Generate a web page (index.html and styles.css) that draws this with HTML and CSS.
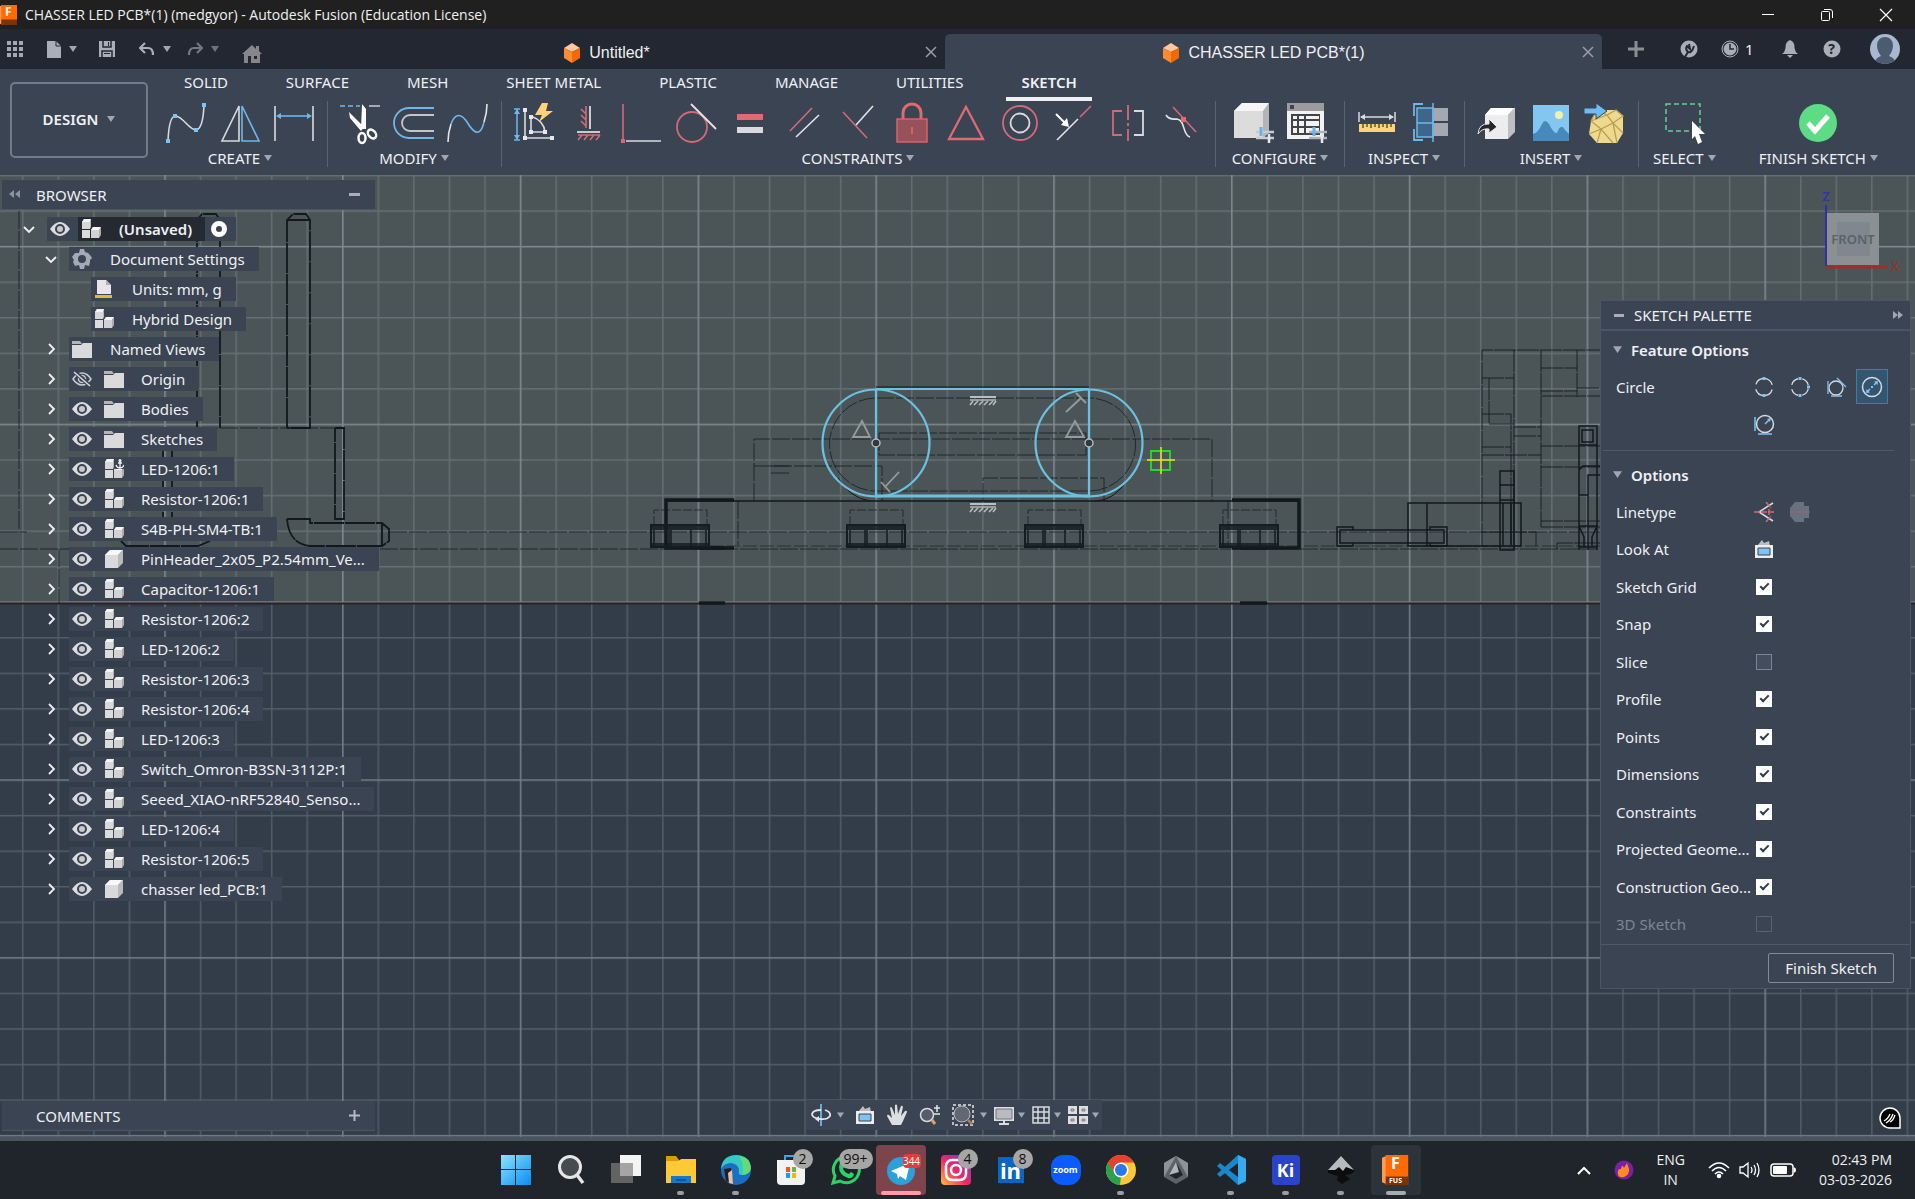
FILE: index.html
```html
<!DOCTYPE html>
<html lang="en">
<head>
    <meta charset="UTF-8">
    <meta name="viewport" content="width=device-width, initial-scale=1.0">
    <title>CHASSER LED PCB*(1) (medgyor) - Autodesk Fusion (Education License)</title>
    <link rel="stylesheet" href="styles.css">
</head>
<body>

<!-- shared icons -->
<svg class="defs" width="0" height="0">
  <symbol id="eye" viewBox="0 0 20 14">
    <path d="M0 7Q5 0 10 0T20 7Q15 14 10 14T0 7Z" fill="#dcdcde"/>
    <circle cx="10" cy="7" r="4" fill="#c9c9cc" stroke="#3b4453" stroke-width="2"/>
  </symbol>
  <symbol id="eye-off" viewBox="0 0 20 16">
    <path d="M1 8Q5 2 10 2T19 8Q15 14 10 14T1 8Z" fill="none" stroke="#c9ccd2" stroke-width="1.5"/>
    <circle cx="10" cy="8" r="3.5" fill="none" stroke="#c9ccd2" stroke-width="1.5"/>
    <path d="M3 1L18 15" stroke="#3b4453" stroke-width="4"/>
    <path d="M2 1L18 15" stroke="#dcdcde" stroke-width="1.5"/>
  </symbol>
  <symbol id="folder" viewBox="0 0 20 18">
    <path d="M0 1H8L10 4H0Z" fill="#b4b4b6"/>
    <path d="M0 5H9L11 3H20V18H0Z" fill="#dadada"/>
  </symbol>
  <symbol id="parts" viewBox="0 0 20 20">
    <path d="M1 3L3 0H10L9 3V10H1Z" fill="#d8d8d8"/>
    <path d="M1 3L3 0H10L9 3Z" fill="#f4f4f4"/>
    <path d="M9 3L10 0V8L9 10Z" fill="#b8b8b8"/>
    <path d="M1 11H9V19H1Z" fill="#dcdcdc"/>
    <path d="M10 11L12 8H20L18 11V19H10Z" fill="#d2d2d2"/>
    <path d="M10 11L12 8H20L18 11Z" fill="#f6f6f6"/>
    <path d="M18 11L20 8V16L18 19Z" fill="#adadad"/>
  </symbol>
  <symbol id="parts-anchor" viewBox="0 0 20 20">
    <use href="#parts"/>
    <path d="M11 0H20V10H11Z" fill="#3b4453"/>
    <path d="M16 2V9M14 4H18M12 6Q13 9 16 9T20 6" fill="none" stroke="#f2f2f2" stroke-width="1.300"/>
    <circle cx="16" cy="1.500" r="1.500" fill="#f2f2f2"/>
  </symbol>
  <symbol id="body" viewBox="0 0 20 20">
    <path d="M1 6L6 1H19L14 6V19H1Z" fill="#dadada"/>
    <path d="M1 6L6 1H19L14 6Z" fill="#f8f8f8"/>
    <path d="M14 6L19 1V14L14 19Z" fill="#b9b9b9"/>
  </symbol>
  <symbol id="right" viewBox="0 0 10 12"><path d="M3 1L8 6L3 11" fill="none" stroke="#f0f0f2" stroke-width="1.800"/></symbol>
  <symbol id="down" viewBox="0 0 12 10"><path d="M1 3L6 8L11 3" fill="none" stroke="#f0f0f2" stroke-width="1.800"/></symbol>
  <symbol id="caret" viewBox="0 0 8 6"><path d="M0 0H8L4 6Z" fill="#a0a7b3"/></symbol>
  <symbol id="cube" viewBox="0 0 18 20">
    <path d="M9 0L17 5L9 9L1 5Z" fill="#ffc9a0"/>
    <path d="M1 5L9 9V20L1 15Z" fill="#ff8a30"/>
    <path d="M17 5L9 9V20L17 15Z" fill="#f26a05"/>
  </symbol>
  <symbol id="cross" viewBox="0 0 12 12"><path d="M1 1L11 11M11 1L1 11" stroke="currentColor" stroke-width="1.500"/></symbol>
  <symbol id="lookat" viewBox="0 0 20 20">
    <path d="M3 7L8 1L10 4L15 2L16 7Z" fill="#bdbdc0"/>
    <path d="M1 6H19V19H1Z" fill="#ededee"/>
    <path d="M4 9H16V16H4Z" fill="#7cc4f5" stroke="#3b4453"/>
  </symbol>
  <symbol id="fusion" viewBox="0 0 30 32">
    <path d="M0 3L7 0V32L0 29Z" fill="#ff9a55"/>
    <path d="M4 0H28V32H4Z" fill="#ff6b00"/>
    <path d="M4 23H28V32H4Z" fill="#7a3304"/>
  </symbol>
</svg>

<header class="titlebar">
  <div class="app-icon"><svg width="17" height="20" viewBox="2 0 26 32" preserveAspectRatio="none"><use href="#fusion" width="30" height="32"/></svg><b>F</b></div>
  <h1>CHASSER LED PCB*(1) (medgyor) - Autodesk Fusion (Education License)</h1>
  <div class="win-buttons">
    <button aria-label="Minimize"><svg width="14" height="14"><path d="M1 6.500H13" stroke="#fff"/></svg></button>
    <button aria-label="Restore"><svg width="14" height="14" fill="none" stroke="#fff"><rect x="1.500" y="3.500" width="8" height="9" rx="1"/><path d="M4 1.500H10Q12.500 1.500 12.500 4V10"/></svg></button>
    <button aria-label="Close"><svg width="14" height="14"><path d="M1 1L13 13M13 1L1 13" stroke="#fff" stroke-width="1.200"/></svg></button>
  </div>
</header>

<nav class="tabbar">
  <div class="quick">
    <button aria-label="Data panel"><svg width="16" height="16" fill="#a3a8b2"><path d="M0 0H4V4H0ZM6 0H10V4H6ZM12 0H16V4H12ZM0 6H4V10H0ZM6 6H10V10H6ZM12 6H16V10H12ZM0 12H4V16H0ZM6 12H10V16H6ZM12 12H16V16H12Z"/></svg></button>
    <button class="with-caret file" aria-label="File"><svg width="14" height="17"><path d="M0 0H9L14 5V17H0Z" fill="#a9aeb8"/><path d="M9 0V5H14" fill="none" stroke="#222731"/></svg><svg class="caret"><use href="#caret"/></svg></button>
    <button class="save" aria-label="Save"><svg width="16" height="16"><path d="M0 0H16V16H0Z" fill="#a9aeb8"/><path d="M4 0V6H12V0M3 16V10H13V16" fill="none" stroke="#222731" stroke-width="1.500"/><path d="M9 1H10V5H9ZM5 12H11V13H5Z" fill="#222731"/></svg></button>
    <button class="with-caret" aria-label="Undo"><svg width="16" height="14"><path d="M6 1L1 6L6 11M1 6H9Q14 6 14 13" fill="none" stroke="#a9aeb8" stroke-width="2.200"/></svg><svg class="caret"><use href="#caret"/></svg></button>
    <button class="with-caret dim" aria-label="Redo"><svg width="16" height="14"><path d="M10 1L15 6L10 11M15 6H7Q2 6 2 13" fill="none" stroke="#a9aeb8" stroke-width="2.200"/></svg><svg class="caret"><use href="#caret"/></svg></button>
    <button class="home" aria-label="Home"><svg width="20" height="18"><path d="M0 9L10 0L14 4V1H17V6L20 9H18V18H2V9Z" fill="#85878a"/><path d="M6 18V11H9V18M12 11H15V14H12Z" fill="#222731"/></svg></button>
  </div>
  <div class="doc-tabs">
    <div class="doc-tab"><a href="#untitled"><svg width="18" height="20"><use href="#cube"/></svg>Untitled*</a><button aria-label="Close tab"><svg width="12" height="12"><use href="#cross"/></svg></button></div>
    <div class="doc-tab active"><a href="#chasser"><svg width="18" height="20"><use href="#cube"/></svg>CHASSER LED PCB*(1)</a><button aria-label="Close tab"><svg width="12" height="12"><use href="#cross"/></svg></button></div>
  </div>
  <div class="account">
    <button class="plus" aria-label="New tab"><svg width="16" height="16"><path d="M8 0V16M0 8H16" stroke="#8b8e92" stroke-width="3"/></svg></button>
    <button class="ext" aria-label="Extensions"><svg width="18" height="18"><circle cx="9" cy="9" r="8.500" fill="#a9aeb8"/><path d="M5 17L8 12Q5 9 7 6L10 9L9 4M12 11L14 6M8 12Q11 13 12 10" fill="none" stroke="#222731" stroke-width="2"/></svg></button>
    <button class="jobs" aria-label="Job status"><svg width="18" height="18" fill="none" stroke="#a9aeb8"><circle cx="9" cy="9" r="8"/><circle cx="9" cy="9" r="6" fill="#a9aeb8"/><path d="M9 4V9H13" stroke="#222731" stroke-width="1.500"/></svg>1</button>
    <button class="bell" aria-label="Notifications"><svg width="16" height="18"><path d="M8 0Q13 2 12.500 8Q13 12 16 14H0Q3 12 3.500 8Q3 2 8 0ZM5 15H11L8 18Z" fill="#a9aeb8"/></svg></button>
    <button class="help" aria-label="Help"><svg width="18" height="18"><circle cx="9" cy="9" r="8.500" fill="#a9aeb8"/></svg><b>?</b></button>
    <button class="avatar" aria-label="Profile"><svg width="30" height="30"><defs><clipPath id="av"><circle cx="15" cy="15" r="15"/></clipPath></defs><g clip-path="url(#av)"><path d="M0 0H30V30H0Z" fill="#a8b8d0"/><path d="M4 30Q5 24 11 22Q7 17 7 11Q8 3 15 3T23 11Q23 17 19 22Q25 24 26 30Z" fill="#4c5b70"/></g></svg></button>
  </div>
</nav>

<section class="ribbon">
  <button class="workspace">DESIGN<svg class="caret"><use href="#caret"/></svg></button>
  <div class="ribbon-main">
    <div class="ribbon-tabs">
      <a href="#solid">SOLID</a>
      <a href="#surface">SURFACE</a>
      <a href="#mesh">MESH</a>
      <a href="#sheet">SHEET METAL</a>
      <a href="#plastic">PLASTIC</a>
      <a href="#manage">MANAGE</a>
      <a href="#utilities">UTILITIES</a>
      <a href="#sketch" class="current">SKETCH</a>
    </div>
    <div class="groups">
      <div class="group">
        <div class="tools">
          <button aria-label="Spline"><svg viewBox="0 0 44 44"><path d="M4 40Q5 16 11 15C18 14 25 29 32 29Q39 28 40 4" fill="none" stroke="#d8dadf" stroke-width="1.600"/><path d="M2 38H6V42H2ZM9 13H13V17H9ZM30 27H34V31H30ZM38 2H42V6H38Z" fill="#7cc4f5"/></svg></button>
          <button aria-label="Mirror"><svg viewBox="0 0 44 44" fill="none" stroke-width="1.600"><path d="M21 5V40H4Z" stroke="#d8dadf"/><path d="M24 5V40H41Z" stroke="#6db8ea"/></svg></button>
          <button aria-label="Sketch dimension"><svg viewBox="0 0 44 44"><path d="M3 5V40M41 5V40" stroke="#d8dadf" stroke-width="1.600"/><path d="M6 15H38" stroke="#6db8ea" stroke-width="1.600"/><path d="M4 15L9 12V18ZM40 15L35 12V18Z" fill="#6db8ea"/></svg></button>
        </div>
        <button class="group-label">CREATE<svg class="caret"><use href="#caret"/></svg></button>
      </div>
      <div class="group">
        <div class="tools">
          <button aria-label="Trim"><svg viewBox="0 0 44 44"><path d="M2 5H22" stroke="#6db8ea" stroke-width="1.600" stroke-dasharray="5 3"/><path d="M31 5H42" stroke="#c4c6ca" stroke-width="1.600"/><path d="M24 3L28 8V28H23ZM11 11L26 26L23 30L12 17Z" fill="#fff"/><ellipse cx="24" cy="37" rx="3.500" ry="5" fill="none" stroke="#fff" stroke-width="2.500"/><ellipse cx="34" cy="33" rx="3.500" ry="5" transform="rotate(-40 34 33)" fill="none" stroke="#fff" stroke-width="2.500"/></svg></button>
          <button aria-label="Offset"><svg viewBox="0 0 44 44" fill="none" stroke-width="1.800"><path d="M42 7H17A15 15 0 0 0 17 37H42" stroke="#6db8ea"/><path d="M42 14H18A8 8 0 0 0 18 30H42" stroke="#c4c6ca"/></svg></button>
          <button aria-label="Extend"><svg viewBox="0 0 44 44" fill="none" stroke-width="1.600"><path d="M2 41Q2 32 5 23M38 21Q41 12 41 3" stroke="#e4e5e8"/><path d="M5 23C9 12 15 12 21 21C27 31 34 38 38 21" stroke="#6db8ea"/></svg></button>
        </div>
        <button class="group-label">MODIFY<svg class="caret"><use href="#caret"/></svg></button>
      </div>
      <div class="group constraints">
        <div class="tools">
          <button aria-label="Auto constrain"><svg viewBox="0 0 44 44" fill="none"><path d="M5 8V38M2 8H8M2 39H8" stroke="#6db8ea" stroke-width="1.500"/><path d="M5 8L2 13H8ZM5 39L2 34H8Z" fill="#6db8ea"/><path d="M13 9V37H40M19 15V31H33Q32 20 19 15" stroke="#d8dadf" stroke-width="1.600"/><path d="M11 7H15V11H11ZM11 35H15V39H11ZM38 35H42V39H38ZM17 14H21V18H17ZM17 29H21V33H17ZM31 29H35V33H31Z" fill="#e8e8ea"/><path d="M30 2L23 14H30L27 21L41 10H34L36 2Z" fill="#ffd27a"/></svg></button>
          <button aria-label="Horizontal/Vertical"><svg viewBox="0 0 44 44" fill="none" stroke-width="1.600"><path d="M20 5V27M15 8L20 13M15 14L20 19M15 20L20 25M12 34H34M16 34L12 39M22 34L18 39M28 34L24 39M34 34L30 39" stroke="#d36a75"/><path d="M24 5V28M11 31H34" stroke="#c9cbd0" stroke-width="2"/></svg></button>
          <button aria-label="Coincident"><svg viewBox="0 0 44 44"><path d="M3 3V38" stroke="#d36a75" stroke-width="1.600"/><path d="M6 40H41" stroke="#d8dadf" stroke-width="1.600"/><path d="M1 38H5V42H1Z" fill="#e8606d"/></svg></button>
          <button aria-label="Tangent"><svg viewBox="0 0 44 44" fill="none" stroke-width="1.800"><circle cx="18" cy="26" r="15" stroke="#d36a75"/><path d="M17 3L42 28" stroke="#e4e5e8"/></svg></button>
          <button aria-label="Equal"><svg viewBox="0 0 44 44"><path d="M9 13H35V19H9Z" fill="#e06a70"/><path d="M9 26H35V32H9Z" fill="#d8dadf"/></svg></button>
          <button aria-label="Parallel"><svg viewBox="0 0 44 44" stroke-width="1.600"><path d="M8 30L30 7" stroke="#d36a75"/><path d="M14 36L37 14" stroke="#e4e5e8"/></svg></button>
          <button aria-label="Perpendicular"><svg viewBox="0 0 44 44" stroke-width="1.600"><path d="M7 11L31 37" stroke="#d36a75"/><path d="M20 24L37 5" stroke="#e4e5e8"/></svg></button>
          <button aria-label="Fix"><svg viewBox="0 0 44 44"><path d="M13 18V12A9 9 0 0 1 31 12V18" fill="none" stroke="#e06a70" stroke-width="3"/><path d="M7 18H37V41H7Z" fill="#97515b" stroke="#d9626d" stroke-width="1.500"/><path d="M22 26V33" stroke="#e06a70" stroke-width="1.500"/></svg></button>
          <button aria-label="Midpoint"><svg viewBox="0 0 44 44"><path d="M22 6L39 38H5Z" fill="none" stroke="#e06a70" stroke-width="2.300"/></svg></button>
          <button aria-label="Concentric"><svg viewBox="0 0 44 44" fill="none" stroke-width="1.800"><circle cx="22" cy="22" r="17" stroke="#d36a75"/><circle cx="22" cy="22" r="9.500" stroke="#d8dadf"/></svg></button>
          <button aria-label="Collinear"><svg viewBox="0 0 44 44" stroke-width="1.600"><path d="M5 39L26 18" stroke="#e4e5e8"/><path d="M28 16L39 5" stroke="#d36a75"/><path d="M4 13L14 23" stroke="#fff" stroke-width="2"/><path d="M17 26L9 24L15 17Z" fill="#fff"/></svg></button>
          <button aria-label="Symmetry"><svg viewBox="0 0 44 44" fill="none" stroke-width="1.800"><path d="M16 10H7V34H16" stroke="#d36a75"/><path d="M22 4V40" stroke="#d36a75" stroke-dasharray="15 3 3 3"/><path d="M28 10H37V34H28" stroke="#d8dadf"/></svg></button>
          <button aria-label="Curvature"><svg viewBox="0 0 44 44" fill="none" stroke-width="1.600"><path d="M13 6L36 31" stroke="#d36a75"/><path d="M6 14Q9 19 17 18C26 20 22 34 30 36" stroke="#e4e5e8"/><path d="M21 16H26V21H21Z" fill="#e06a70"/></svg></button>
        </div>
        <button class="group-label">CONSTRAINTS<svg class="caret"><use href="#caret"/></svg></button>
      </div>
      <div class="group wide">
        <div class="tools">
          <button aria-label="Configure model"><svg viewBox="0 0 44 44"><path d="M3 10L11 2H38L34 10V37H3Z" fill="#dcdcdc"/><path d="M3 10L11 2H38L32 10Z" fill="#f6f6f6"/><path d="M32 10L38 2V32L32 37Z" fill="#b4b4b4"/><path d="M25 31H43M25 37H43" stroke="#c9cbd0" stroke-width="2.500"/><path d="M30 26V35" stroke="#63b5ee" stroke-width="3"/><path d="M38 33V42" stroke="#e8e8ea" stroke-width="2.500"/></svg></button>
          <button aria-label="Configuration table"><svg viewBox="0 0 44 44"><path d="M2 2H39V38H2Z" fill="#f2f2f2"/><path d="M2 2H39V10H2Z" fill="#9c9c9e"/><path d="M5 4H9V8H5ZM6 13H35V34H6Z" fill="#414346"/><path d="M8 15H12V18H8ZM14 15H19V18H14ZM21 15H34V18H21ZM8 20H12V25H8ZM14 20H19V25H14ZM21 20H34V25H21ZM8 27H12V32H8ZM14 27H19V32H14ZM21 27H34V32H21Z" fill="#f2f2f2"/><path d="M24 31H42M24 37H42" stroke="#aeb3bb" stroke-width="2.500"/><path d="M29 26V35" stroke="#63b5ee" stroke-width="3"/><path d="M37 33V42" stroke="#e8e8ea" stroke-width="2.500"/></svg></button>
        </div>
        <button class="group-label">CONFIGURE<svg class="caret"><use href="#caret"/></svg></button>
      </div>
      <div class="group">
        <div class="tools">
          <button aria-label="Measure"><svg viewBox="0 0 44 44"><path d="M4 11V21M40 11V21M6 16H38" stroke="#d8dadf" stroke-width="1.500"/><path d="M5 16L10 13V19ZM39 16L34 13V19Z" fill="#d8dadf"/><path d="M4 23H40V31H4Z" fill="#ffd27a"/><path d="M8 23V27M12 23V26M16 23V27M20 23V26M24 23V27M28 23V26M32 23V27M36 23V26" stroke="#5f5335" stroke-width="1.500"/></svg></button>
          <button aria-label="Section"><svg viewBox="0 0 44 44"><path d="M8 7H24V22H8ZM8 22H24V36H8Z" fill="#3d668a" stroke="#6db8ea" stroke-width="1.500"/><path d="M25 7H39V20H25ZM25 22H39V35H25Z" fill="#a6a8b0"/><path d="M14 3H5V15M14 39H5V28" fill="none" stroke="#6db8ea" stroke-width="1.800"/><path d="M24 2V41" stroke="#6db8ea" stroke-width="1.500"/></svg></button>
        </div>
        <button class="group-label">INSPECT<svg class="caret"><use href="#caret"/></svg></button>
      </div>
      <div class="group">
        <div class="tools">
          <button aria-label="Insert derive"><svg viewBox="0 0 44 44"><path d="M10 14L16 7H40L33 14V38H10Z" fill="#ececee"/><path d="M10 14L16 7H40L33 14Z" fill="#fff"/><path d="M33 14L40 7V31L33 38Z" fill="#bfbfc3"/><path d="M3 33Q4 22 14 23V18L22 26L14 32V28Q7 27 3 33Z" fill="#26282c" stroke="#e8e8ea"/></svg></button>
          <button aria-label="Insert image"><svg viewBox="0 0 44 44"><path d="M4 4H40V40H4Z" fill="#84c6f2"/><circle cx="30" cy="14" r="4" fill="#f5efae"/><path d="M4 33Q9 32 13 23Q16 17 20 23Q25 33 28 32Q32 21 36 29L40 33V40H4Z" fill="#4789ba"/></svg></button>
          <button aria-label="Insert mesh"><svg viewBox="0 0 44 44"><path d="M8 20L14 9H33L40 15V32L34 42H14L6 33Z" fill="#f0d98f"/><path d="M8 20L14 9L24 14L33 9L40 15L30 22L40 32M8 20L24 14L30 22L18 28L8 20M6 33L18 28L30 42M30 22L34 42M18 28L14 42" fill="none" stroke="#b89f54" stroke-width="1.300"/><path d="M1 7H13V2L24 10L13 18V13H1Z" fill="#6dbcf5" stroke="#3a4453"/></svg></button>
        </div>
        <button class="group-label">INSERT<svg class="caret"><use href="#caret"/></svg></button>
      </div>
      <div class="group select">
        <div class="tools">
          <button aria-label="Select"><svg viewBox="0 0 44 44"><path d="M4 3H38V30H4Z" fill="none" stroke="#5fd48c" stroke-width="1.500" stroke-dasharray="5 3"/><path d="M30 20L43 33H37L40 41L36 43L33 35L30 38Z" fill="#fff"/></svg></button>
        </div>
        <button class="group-label">SELECT<svg class="caret"><use href="#caret"/></svg></button>
      </div>
      <div class="group finish">
        <div class="tools">
          <button aria-label="Finish sketch"><svg viewBox="0 0 44 44"><circle cx="22" cy="22" r="19" fill="#5edb85"/><path d="M12 22L19 30L32 15" fill="none" stroke="#fff" stroke-width="5"/></svg></button>
        </div>
        <button class="group-label">FINISH SKETCH<svg class="caret"><use href="#caret"/></svg></button>
      </div>
    </div>
  </div>
</section>

<main class="canvas">
  <!-- sketch drawing, in window coordinates -->
  <svg class="sketch" width="100%" height="100%">
    <defs>
      <pattern id="minor" width="35.560" height="35.560" patternUnits="userSpaceOnUse" x="-13.600" y="70.900">
        <path d="M.8 0V36M0 .8H36" fill="none" stroke="#b4c0c8" stroke-opacity=".25" stroke-width="1.400"/>
      </pattern>
      <pattern id="major" width="177.800" height="177.800" patternUnits="userSpaceOnUse" x="-13.600" y="70.900">
        <path d="M.8 0V178M0 .8H178" fill="none" stroke="#b4c4c8" stroke-opacity=".3" stroke-width="1.600"/>
      </pattern>
      <g id="led" fill="none" stroke="#131d22">
        <path d="M3 15V0H56V15" stroke-opacity=".7" stroke-dasharray="9 2"/>
        <path d="M0 15H58V37H0Z" stroke-width="2"/>
        <path d="M1 18H57M1 35H57" stroke-width="4" stroke-opacity=".8"/>
        <path d="M18 20V36M20 20V36M40 20V36M3 20V36M55 20V36" stroke-width="1.500"/>
      </g>
      <g id="ground"><path d="M0 1H26" stroke="#b9bec0" stroke-width="2"/><path d="M0 4H26" stroke="#e0e3e4"/><path d="M3 5L0 9M8 5L4 9M13 5L9 9M18 5L14 9M23 5L19 9M26 5L23 9" stroke="#b9bec0" stroke-width="1.500"/></g>
    </defs>
    <rect width="100%" height="428" fill="#4b5557"/>
    <rect width="100%" height="100%" fill="url(#minor)"/>
    <rect width="100%" height="100%" fill="url(#major)"/>
    <path d="M0 428.500H1915" stroke="#2e1f26" stroke-width="2"/>
    <g transform="translate(0 -175)" fill="none" stroke="#12191d">
      <!-- pins behind the browser -->
      <g stroke-width="1.800" stroke-dasharray="30 1">
        <path d="M197 428V220L202 214H216L220 220V428M287 428V220L293 214H306L310 220V428H287M287 220H310M335 428H344V519H335V428M163 450V520M172 450V520"/>
        <path d="M287 519H310V523H382L389 529V541L382 546H310Q289 544 287 519M382 523V546M121 541L126 546H198L210 541"/>
      </g>
      <path d="M19 211V532M160 428H345M0 532H27M389 532H1600M0 549H1600M59 549V603" stroke-opacity=".75" stroke-dasharray="18 2"/>
      <path d="M709 546H1600" stroke-opacity=".6" stroke-dasharray="14 3"/>
      <!-- switch outline -->
      <g stroke-opacity=".75" stroke-dasharray="18 2">
        <path d="M754 501V439H1212V501M754 466H882V501M771 466H790M771 473H790M983 501V478H1104V501M879 433H1086V455H879Z"/>
        <path d="M876 398H1089A46 46 0 0 1 1089 491H876A46 46 0 0 1 876 398Z"/>
        <path d="M738 501V545M1228 501V545"/>
      </g>
      <path d="M666 501H1300" stroke-width="1.500"/>
      <path d="M876 387H1089M1128 478Q1115 501 1095 501M838 478Q850 498 870 501"/>
      <g stroke-width="3.500">
        <path d="M734 500H666V548H734M1232 500H1299V548H1232"/>
        <path d="M699 548H725M1240 548H1267M699 603H725M1240 603H1267"/>
      </g>
      <use href="#led" x="651" y="510"/>
      <use href="#led" x="847" y="510"/>
      <use href="#led" x="1025" y="510"/>
      <use href="#led" x="1220" y="510"/>
      <!-- right side parts -->
      <g stroke-opacity=".85" stroke-dasharray="22 1">
        <path d="M1482 545V350H1600M1514 350V549M1541 350V527M1577 350V397M1541 368H1577M1541 391H1577M1541 396H1600M1482 378H1514M1489 378V424H1514M1482 414H1511V545M1514 427H1541M1514 436H1541M1541 446H1600M1482 447H1511M1482 455H1541M1541 467H1600M1541 521H1600M1541 527H1600"/>
        <path d="M1482 532H1536V546M1557 549V543H1600M1577 388H1600"/>
      </g>
      <g stroke-width="1.500">
        <path d="M1579 426H1597V445H1579ZM1582 430H1593V442H1582ZM1579 445V550M1597 445V550M1588 550V475H1600M1579 495V470L1583 466H1600M1579 495H1588M1579 526H1597L1592 537V547M1579 526L1584 537V547M1579 547H1597"/>
        <path d="M1500 471H1514V550H1500ZM1500 485H1514M1500 500H1514M1503 503V545M1511 503V545M1408 503H1521V546H1408ZM1427 503V546"/>
        <path d="M1353 530V527H1337V546H1353V543M1430 530V527H1447V546H1430V543M1340 530H1444V543H1340Z"/>
      </g>
      <!-- selected slot -->
      <g stroke="#6cc0e0" stroke-width="2.200">
        <circle cx="876" cy="443" r="53.500"/>
        <circle cx="1089" cy="443" r="53.500"/>
        <path d="M876 389H1089M876 389V496M1089 389V496"/>
        <path d="M876 496H1089" stroke-width="3"/>
      </g>
      <g fill="#33383a" stroke="#b5babb" stroke-width="1.500"><circle cx="876" cy="443" r="4"/><circle cx="1089" cy="443" r="4"/></g>
      <g stroke="#959c9e" stroke-width="1.800">
        <path d="M862 421L870 437H853ZM1075 421L1084 437H1066Z"/>
        <path d="M899 472L885 487M881 482L890 492M1076 393L1086 403M1081 398L1066 412"/>
      </g>
      <use href="#ground" x="970" y="396"/>
      <use href="#ground" x="970" y="503"/>
      <path d="M1151 451H1170V470H1151Z" stroke="#1de01d" stroke-width="1.800"/>
      <path d="M1147 460H1175M1161 447V474" stroke="#e8e81a" stroke-width="1.500"/>
      <!-- view cube -->
      <path d="M1827 213H1879V265H1827Z" fill="#8b9092" stroke="none"/>
      <path d="M1837 222H1870V256H1837Z" fill="#7f888e" stroke="none"/>
      <path d="M1826 205V266" stroke="#2f2fa8" stroke-width="2"/>
      <path d="M1826 267H1888" stroke="#a12c2c" stroke-width="3"/>
      <text class="cube-face" x="1853" y="244">FRONT</text>
      <text class="axis-z" x="1826" y="201">Z</text>
      <text class="axis-x" x="1895" y="271">X</text>
    </g>
  </svg>

  <aside class="browser">
    <div class="panel-head"><svg width="12" height="10" fill="#8b93a1"><path d="M5 0V8L0 4ZM11 0V8L6 4Z"/></svg><h2>BROWSER</h2><button aria-label="Collapse"><svg width="11" height="3"><path d="M0 0H11V3H0Z" fill="#a9aeb8"/></svg></button></div>
    <ul class="tree">
      <li class="root"><button class="tw" aria-label="Collapse"><svg width="12" height="10"><use href="#down"/></svg></button><div class="chip"><button class="vis" aria-label="Visibility"><svg width="20" height="14"><use href="#eye"/></svg></button><span class="name"><svg width="20" height="20"><use href="#parts"/></svg>(Unsaved)</span><input type="radio" checked aria-label="Activate"></div></li>
      <li><button class="tw" aria-label="Collapse"><svg width="12" height="10"><use href="#down"/></svg></button><div class="chip short"><svg width="20" height="20"><path d="M8 0H12L13 3L16 4L18 6L20 9L18 11V13L17 17L13 16L12 20H8L7 16L3 17L1 13L2 11L0 8L3 4L7 4Z" fill="#a3aab6"/><circle cx="10" cy="10" r="4" fill="#3b4453"/></svg><span>Document Settings</span></div></li>
      <li class="leaf"><div class="chip short"><svg width="20" height="20"><path d="M3 1H12L17 6V15H3Z" fill="#e6e6e8"/><path d="M12 1V6H17Z" fill="#b0b0b4"/><path d="M1 16H18V19H1Z" fill="#e8b53a"/></svg><span>Units: mm, g</span></div></li>
      <li class="leaf"><div class="chip short"><svg width="20" height="20"><use href="#parts"/></svg><span>Hybrid Design</span></div></li>
      <li><button class="tw" aria-label="Expand"><svg width="10" height="12"><use href="#right"/></svg></button><div class="chip short"><svg width="20" height="18"><use href="#folder"/></svg><span>Named Views</span></div></li>
      <li><button class="tw" aria-label="Expand"><svg width="10" height="12"><use href="#right"/></svg></button><div class="chip"><button class="vis" aria-label="Visibility"><svg width="20" height="16"><use href="#eye-off"/></svg></button><svg width="20" height="18"><use href="#folder"/></svg><span>Origin</span></div></li>
      <li><button class="tw" aria-label="Expand"><svg width="10" height="12"><use href="#right"/></svg></button><div class="chip"><button class="vis" aria-label="Visibility"><svg width="20" height="14"><use href="#eye"/></svg></button><svg width="20" height="18"><use href="#folder"/></svg><span>Bodies</span></div></li>
      <li><button class="tw" aria-label="Expand"><svg width="10" height="12"><use href="#right"/></svg></button><div class="chip"><button class="vis" aria-label="Visibility"><svg width="20" height="14"><use href="#eye"/></svg></button><svg width="20" height="18"><use href="#folder"/></svg><span>Sketches</span></div></li>
      <li><button class="tw" aria-label="Expand"><svg width="10" height="12"><use href="#right"/></svg></button><div class="chip"><button class="vis" aria-label="Visibility"><svg width="20" height="14"><use href="#eye"/></svg></button><svg width="20" height="20"><use href="#parts-anchor"/></svg><span>LED-1206:1</span></div></li>
      <li><button class="tw" aria-label="Expand"><svg width="10" height="12"><use href="#right"/></svg></button><div class="chip"><button class="vis" aria-label="Visibility"><svg width="20" height="14"><use href="#eye"/></svg></button><svg width="20" height="20"><use href="#parts"/></svg><span>Resistor-1206:1</span></div></li>
      <li><button class="tw" aria-label="Expand"><svg width="10" height="12"><use href="#right"/></svg></button><div class="chip"><button class="vis" aria-label="Visibility"><svg width="20" height="14"><use href="#eye"/></svg></button><svg width="20" height="20"><use href="#parts"/></svg><span>S4B-PH-SM4-TB:1</span></div></li>
      <li><button class="tw" aria-label="Expand"><svg width="10" height="12"><use href="#right"/></svg></button><div class="chip"><button class="vis" aria-label="Visibility"><svg width="20" height="14"><use href="#eye"/></svg></button><svg width="20" height="20"><use href="#body"/></svg><span>PinHeader_2x05_P2.54mm_Ve...</span></div></li>
      <li><button class="tw" aria-label="Expand"><svg width="10" height="12"><use href="#right"/></svg></button><div class="chip"><button class="vis" aria-label="Visibility"><svg width="20" height="14"><use href="#eye"/></svg></button><svg width="20" height="20"><use href="#parts"/></svg><span>Capacitor-1206:1</span></div></li>
      <li><button class="tw" aria-label="Expand"><svg width="10" height="12"><use href="#right"/></svg></button><div class="chip"><button class="vis" aria-label="Visibility"><svg width="20" height="14"><use href="#eye"/></svg></button><svg width="20" height="20"><use href="#parts"/></svg><span>Resistor-1206:2</span></div></li>
      <li><button class="tw" aria-label="Expand"><svg width="10" height="12"><use href="#right"/></svg></button><div class="chip"><button class="vis" aria-label="Visibility"><svg width="20" height="14"><use href="#eye"/></svg></button><svg width="20" height="20"><use href="#parts"/></svg><span>LED-1206:2</span></div></li>
      <li><button class="tw" aria-label="Expand"><svg width="10" height="12"><use href="#right"/></svg></button><div class="chip"><button class="vis" aria-label="Visibility"><svg width="20" height="14"><use href="#eye"/></svg></button><svg width="20" height="20"><use href="#parts"/></svg><span>Resistor-1206:3</span></div></li>
      <li><button class="tw" aria-label="Expand"><svg width="10" height="12"><use href="#right"/></svg></button><div class="chip"><button class="vis" aria-label="Visibility"><svg width="20" height="14"><use href="#eye"/></svg></button><svg width="20" height="20"><use href="#parts"/></svg><span>Resistor-1206:4</span></div></li>
      <li><button class="tw" aria-label="Expand"><svg width="10" height="12"><use href="#right"/></svg></button><div class="chip"><button class="vis" aria-label="Visibility"><svg width="20" height="14"><use href="#eye"/></svg></button><svg width="20" height="20"><use href="#parts"/></svg><span>LED-1206:3</span></div></li>
      <li><button class="tw" aria-label="Expand"><svg width="10" height="12"><use href="#right"/></svg></button><div class="chip"><button class="vis" aria-label="Visibility"><svg width="20" height="14"><use href="#eye"/></svg></button><svg width="20" height="20"><use href="#parts"/></svg><span>Switch_Omron-B3SN-3112P:1</span></div></li>
      <li><button class="tw" aria-label="Expand"><svg width="10" height="12"><use href="#right"/></svg></button><div class="chip"><button class="vis" aria-label="Visibility"><svg width="20" height="14"><use href="#eye"/></svg></button><svg width="20" height="20"><use href="#parts"/></svg><span>Seeed_XIAO-nRF52840_Senso...</span></div></li>
      <li><button class="tw" aria-label="Expand"><svg width="10" height="12"><use href="#right"/></svg></button><div class="chip"><button class="vis" aria-label="Visibility"><svg width="20" height="14"><use href="#eye"/></svg></button><svg width="20" height="20"><use href="#parts"/></svg><span>LED-1206:4</span></div></li>
      <li><button class="tw" aria-label="Expand"><svg width="10" height="12"><use href="#right"/></svg></button><div class="chip"><button class="vis" aria-label="Visibility"><svg width="20" height="14"><use href="#eye"/></svg></button><svg width="20" height="20"><use href="#parts"/></svg><span>Resistor-1206:5</span></div></li>
      <li><button class="tw" aria-label="Expand"><svg width="10" height="12"><use href="#right"/></svg></button><div class="chip"><button class="vis" aria-label="Visibility"><svg width="20" height="14"><use href="#eye"/></svg></button><svg width="20" height="20"><use href="#body"/></svg><span>chasser led_PCB:1</span></div></li>
    </ul>
  </aside>

  <aside class="palette">
    <div class="palette-head"><button aria-label="Collapse"><svg width="10" height="3"><path d="M0 0H10V3H0Z" fill="#a9aeb8"/></svg></button><h2>SKETCH PALETTE</h2><button aria-label="Dock"><svg width="10" height="8" fill="#a0a7b3"><path d="M0 0V8L5 4ZM5 0V8L10 4Z"/></svg></button></div>
    <h3><svg class="caret"><use href="#caret"/></svg>Feature Options</h3>
    <div class="circle-row">
      <span>Circle</span>
      <div class="circle-tools">
        <button aria-label="2-point circle"><svg viewBox="0 0 22 22"><circle cx="11" cy="11" r="8.500" fill="none" stroke="#d8dadf" stroke-width="1.300" stroke-dasharray="21.700 5" stroke-dashoffset="-2.500"/><path d="M9.500 1H12.500V4H9.500ZM9.500 18H12.500V21H9.500Z" fill="#7cc4f5"/></svg></button>
        <button aria-label="3-point circle"><svg viewBox="0 0 22 22"><circle cx="11" cy="11" r="8.500" fill="none" stroke="#d8dadf" stroke-width="1.300" stroke-dasharray="9 4.350" stroke-dashoffset="-2"/><path d="M9.500 1H12.500V4H9.500ZM9.500 18H12.500V21H9.500ZM18 9.500H21V12.500H18Z" fill="#7cc4f5"/></svg></button>
        <button aria-label="2-tangent circle"><svg viewBox="0 0 22 22" fill="none" stroke-width="1.300"><circle cx="11" cy="12" r="7" stroke="#d8dadf"/><path d="M3 5V18M12 2L21 11M6 20H17" stroke="#7cc4f5"/></svg></button>
        <button class="on" aria-label="Center diameter circle"><svg viewBox="0 0 22 22" fill="none" stroke-width="1.500"><circle cx="11" cy="11" r="9.500" stroke="#d8dadf"/><path d="M6 16L9 13M13 9L16 6" stroke="#7cc4f5"/><path d="M5 17L5.500 13L9 16.500ZM17 5L13 5.500L16.500 9ZM10 10H12V12H10Z" fill="#7cc4f5"/></svg></button>
        <button aria-label="3-tangent circle"><svg viewBox="0 0 22 22" fill="none" stroke-width="1.500"><circle cx="12" cy="11" r="8.500" stroke="#d8dadf"/><path d="M2 4V18M5 21H19M12 11L17 6" stroke="#7cc4f5"/><path d="M18 5L14 6L17 9Z" fill="#7cc4f5"/></svg></button>
      </div>
    </div>
    <hr>
    <h3><svg class="caret"><use href="#caret"/></svg>Options</h3>
    <div class="options">
      <div><span>Linetype</span><button aria-label="Construction"><svg width="20" height="20" fill="none" stroke-width="1.500"><path d="M19 1L5 10L19 19" stroke="#d8dadf"/><path d="M0 10H20M12 0L17 6M12 20L17 14M15 7V13" stroke="#d36a75" stroke-dasharray="6 1"/></svg></button><button class="second" aria-label="Centerline"><svg width="20" height="20"><path d="M5 0H14V4H19V16H14V20H5L0 14V6Z" fill="#69717e"/><path d="M0 10H20" stroke="#a5626d" stroke-dasharray="5 1"/></svg></button></div>
      <div><span>Look At</span><button aria-label="Look at"><svg width="20" height="20"><use href="#lookat"/></svg></button></div>
      <div><label for="o1">Sketch Grid</label><input id="o1" type="checkbox" checked></div>
      <div><label for="o2">Snap</label><input id="o2" type="checkbox" checked></div>
      <div><label for="o3">Slice</label><input id="o3" type="checkbox"></div>
      <div><label for="o4">Profile</label><input id="o4" type="checkbox" checked></div>
      <div><label for="o5">Points</label><input id="o5" type="checkbox" checked></div>
      <div><label for="o6">Dimensions</label><input id="o6" type="checkbox" checked></div>
      <div><label for="o7">Constraints</label><input id="o7" type="checkbox" checked></div>
      <div><label for="o8">Projected Geome...</label><input id="o8" type="checkbox" checked></div>
      <div><label for="o9">Construction Geo...</label><input id="o9" type="checkbox" checked></div>
      <div class="off"><label for="o10">3D Sketch</label><input id="o10" type="checkbox" disabled></div>
    </div>
    <div class="palette-foot"><button>Finish Sketch</button></div>
  </aside>

  <div class="comments"><h2>COMMENTS</h2><button aria-label="Add comment"><svg width="11" height="11"><path d="M5.500 0V11M0 5.500H11" stroke="#b5bac3" stroke-width="2"/></svg></button></div>

  <div class="navbar">
    <button class="has-menu" aria-label="Orbit"><svg width="20" height="22" fill="none" stroke-width="1.800"><path d="M10 0V22" stroke="#6db8ea"/><path d="M14 6Q20 8 19 12Q16 16 9 15Q1 14 1 10Q2 6 10 6" stroke="#e4e5e8"/><path d="M8 12L4 15L8 18Z" fill="#e4e5e8"/></svg><svg class="caret"><use href="#caret"/></svg></button>
    <button aria-label="Look at"><svg width="20" height="20"><use href="#lookat"/></svg></button>
    <button aria-label="Pan"><svg width="22" height="22"><path d="M6 21L1 12Q1 10 3 11L6 14L4 4Q5 2 6 4L9 11L9 1Q10 0 11 1L12 10L15 2Q16 1 17 3L15 12L19 7Q21 6 21 8L17 17L15 21Z" fill="#dedee0"/></svg></button>
    <button aria-label="Zoom"><svg width="22" height="22" fill="none"><circle cx="8" cy="11" r="6.500" fill="#555d6a" stroke="#d8dadf" stroke-width="1.500"/><path d="M13 16L16 20" stroke="#d6a764" stroke-width="3"/><path d="M18 1V8M15 4H21M15 10H21" stroke="#e4e5e8" stroke-width="1.500"/></svg></button>
    <button class="has-menu" aria-label="Zoom window"><svg width="22" height="22" fill="none"><path d="M1 1H21V21H1Z" stroke="#e4e5e8" stroke-width="1.500" stroke-dasharray="3 2"/><circle cx="10" cy="10" r="8" fill="#616875" stroke="#b5bac3"/><path d="M16 16L20 20" stroke="#a78250" stroke-width="2.500"/></svg><svg class="caret"><use href="#caret"/></svg></button>
    <button class="has-menu" aria-label="Display settings"><svg width="20" height="20"><path d="M0 2H20V16H0Z" fill="#dedee0"/><path d="M2 4H18V14H2Z" fill="#b9bbbf" stroke="#707784"/><path d="M9 16H11V18H15V20H5V18H9Z" fill="#dedee0"/></svg><svg class="caret"><use href="#caret"/></svg></button>
    <button class="has-menu" aria-label="Grid"><svg width="18" height="18"><path d="M1 1H17V17H1ZM6 1V17M12 1V17M1 6H17M1 12H17" fill="none" stroke="#d8dadf" stroke-width="1.500"/></svg><svg class="caret"><use href="#caret"/></svg></button>
    <button class="has-menu" aria-label="Viewports"><svg width="20" height="18"><path d="M0 0H9V8H0ZM11 0H20V8H11ZM0 10H9V18H0ZM11 10H20V18H11Z" fill="#dedee0"/><path d="M3 3H6V5H3ZM14 3H17V5H14ZM3 13H6V15H3ZM14 13H17V15H14Z" fill="#bfc1c4" stroke="#7a8089"/></svg><svg class="caret"><use href="#caret"/></svg></button>
  </div>

  <button class="assistant" aria-label="Assistant"><svg width="22" height="22"><path d="M11 1A10 10 0 1 0 11 21H21V11A10 10 0 0 0 11 1Z" fill="#000" stroke="#fff" stroke-width="1.500"/><path d="M5 14Q9 12 11 7M7 16Q12 13 14 7M11 15Q14 14 16 8" fill="none" stroke="#fff" stroke-width="1.300"/></svg></button>
</main>

<footer class="taskbar">
  <div class="apps">
    <button aria-label="Start"><svg viewBox="0 0 30 30"><defs><linearGradient id="win" x2="1" y2="1"><stop stop-color="#8be3ff"/><stop offset="1" stop-color="#0a8df0"/></linearGradient></defs><path d="M0 0H14V14H0ZM15 0H30V14H15ZM0 15H14V30H0ZM15 15H30V30H15Z" fill="url(#win)"/></svg></button>
    <button aria-label="Search"><svg viewBox="0 0 30 30"><circle cx="14" cy="12" r="10.500" fill="#454b50" stroke="#e6e6e6" stroke-width="3"/><path d="M21 20L27 28" stroke="#e6e6e6" stroke-width="3.500"/></svg></button>
    <button aria-label="Task view"><svg viewBox="0 0 30 30"><path d="M9 0H30V21H9Z" fill="#f4f4f4"/><path d="M0 8H22V28H0Z" fill="#6a6a6a" fill-opacity=".9"/><path d="M9 8H22V21H9Z" fill="#a5a5a5"/></svg></button>
    <button class="run" aria-label="File Explorer"><svg viewBox="0 0 30 30"><path d="M0 1H10L13 5H28V12H0Z" fill="#dd9b0c"/><path d="M0 6H13L15 4H30V28H0Z" fill="#fdc935"/><path d="M5 21H25V28H5Z" fill="#1479cc"/><path d="M10 24H20V26H10Z" fill="#0c5596"/></svg></button>
    <button class="run" aria-label="Edge"><svg viewBox="0 0 30 30"><circle cx="15" cy="15" r="15" fill="#1b6fc2"/><path d="M0 14Q1 0 16 0Q29 1 30 13Q29 20 20 20Q17 19 18 16Q18 9 10 8Q3 8 0 14Z" fill="#35c8c5"/><path d="M18 1Q29 2 30 13Q29 20 21 20Q24 10 18 1Z" fill="#60dc78"/><path d="M3 14L10 13L12 29L5 26Z" fill="#2b1c1a"/><path d="M7 18L11 15L12 29L8 28Z" fill="#e2c4ae"/></svg></button>
    <button aria-label="Store"><svg viewBox="0 0 30 30"><path d="M9 6V1H21V6" fill="none" stroke="#3da5e8" stroke-width="2"/><path d="M1 5H29V26Q29 30 25 30H5Q1 30 1 26Z" fill="#f2f2f2"/><path d="M10 12H14V17H10Z" fill="#f35325"/><path d="M16 12H20V17H16Z" fill="#74b52a"/><path d="M10 18H14V23H10Z" fill="#1c9ce6"/><path d="M16 18H20V23H16Z" fill="#f7b60c"/></svg><i class="badge">2</i></button>
    <button aria-label="WhatsApp"><svg viewBox="0 0 30 30"><path d="M2 28L4 21A13 13 0 1 1 9 26Z" fill="none" stroke="#2bd366" stroke-width="3"/><path d="M9 8L12 8L13 12L12 14Q14 18 18 19L20 17L23 19Q22 24 17 23Q8 20 8 12Z" fill="#2bd366"/></svg><i class="badge pill">99+</i></button>
    <button class="alert" aria-label="Telegram"><svg viewBox="0 0 30 30"><circle cx="15" cy="16" r="14" fill="#2ba0da"/><path d="M5 16L24 8L20 25L14 21L12 24L11 19Z" fill="#fff"/></svg><i class="badge red">344</i></button>
    <button aria-label="Instagram"><svg viewBox="0 0 30 30"><defs><linearGradient id="ig" x1="0" y1="1" x2="1" y2="0"><stop stop-color="#ffc13b"/><stop offset=".45" stop-color="#ee2a63"/><stop offset="1" stop-color="#7a33cf"/></linearGradient></defs><rect width="30" height="30" rx="4" fill="url(#ig)"/><rect x="5" y="5" width="20" height="20" rx="6" fill="none" stroke="#fff" stroke-width="2.500"/><circle cx="15" cy="15" r="5" fill="none" stroke="#fff" stroke-width="2.500"/></svg><i class="badge">4</i></button>
    <button aria-label="LinkedIn"><svg viewBox="0 0 30 30"><path d="M2 2H28V28H2Z" fill="#0a66c2"/></svg><b class="logo-in">in</b><i class="badge">8</i></button>
    <button aria-label="Zoom"><svg viewBox="0 0 30 30"><rect width="30" height="30" rx="12" fill="#0b5cff"/></svg><b class="logo-zoom">zoom</b></button>
    <button class="run" aria-label="Chrome"><svg viewBox="0 0 30 30"><circle cx="15" cy="15" r="15" fill="#fcc934"/><path d="M2 7.500A15 15 0 0 1 28 7.500H15L8 19Z" fill="#e8402f"/><path d="M2 7.500L9 19L15 22L14 30A15 15 0 0 1 2 7.500Z" fill="#2aa14c"/><circle cx="15" cy="15" r="7.500" fill="#fff"/><circle cx="15" cy="15" r="6" fill="#2b78e8"/></svg></button>
    <button aria-label="Design app"><svg viewBox="0 0 30 30"><path d="M15 1L27 8V22L15 29L3 22V8Z" fill="#5d6267"/><path d="M15 1L3 22V8ZM15 1L27 22L27 8Z" fill="#8d9296"/><path d="M15 7L22 20L15 24L8 20Z" fill="#1f252b"/><path d="M15 7L8 20L18 17Z" fill="#b1b5b8"/></svg></button>
    <button class="run" aria-label="Visual Studio Code"><svg viewBox="0 0 30 30"><path d="M22 0L30 4V26L22 30L1 11L4 8L22 22V8L4 22L1 19Z" fill="#1a86cc"/><path d="M22 0L30 4V26L22 30Z" fill="#38aaf0"/></svg></button>
    <button class="run" aria-label="KiCad"><svg viewBox="0 0 30 30"><rect x="1" width="28" height="30" rx="4" fill="#2a43c8"/></svg><b class="logo-ki">Ki</b></button>
    <button class="run" aria-label="Inkscape"><svg viewBox="0 0 30 30"><path d="M15 1L29 16Q25 20 19 20L24 24L16 29L11 25L12 21L2 18V15Z" fill="#0c0d0e"/><path d="M15 1L28 15L20 12L17 16L13 12L9 15L2 15Z" fill="#b8bbbd"/></svg></button>
    <button class="run now" aria-label="Fusion"><svg viewBox="0 0 30 32"><use href="#fusion"/></svg><b class="logo-f">F</b><b class="logo-fus">FUS</b></button>
  </div>
  <div class="tray">
    <button aria-label="Show hidden icons"><svg width="14" height="9"><path d="M1 8L7 2L13 8" fill="none" stroke="#fff" stroke-width="2"/></svg></button>
    <button aria-label="Firefox"><svg width="20" height="20"><circle cx="10" cy="10" r="9.500" fill="#7b1fa8"/><path d="M4 15Q3 8 7 9Q8 3 10 8L13 3L15 9Q16 14 10 17Q5 18 4 15Z" fill="#ff8a1f"/></svg></button>
    <button class="lang">ENG<br>IN</button>
    <button class="status" aria-label="Network, volume, battery">
      <svg width="22" height="18" fill="none" stroke="#fff" stroke-width="1.600"><path d="M1 7Q11 -3 21 7M4 10Q11 3 18 10M7 13Q11 9 15 13"/><circle cx="11" cy="15" r="1.500" fill="#fff"/></svg>
      <svg width="22" height="18" fill="none" stroke="#fff" stroke-width="1.300"><path d="M1 6H4L9 2V16L4 12H1ZM12 6Q14 9 12 12M15 4Q18 9 15 14M18 2Q22 9 18 16"/></svg>
      <svg width="26" height="14"><rect x="1" y="1" width="22" height="12" rx="3" fill="none" stroke="#fff" stroke-width="1.500"/><rect x="3" y="3" width="14" height="8" rx="1" fill="#fff"/><path d="M24 5Q26 7 24 9" stroke="#fff" stroke-width="2"/></svg>
    </button>
    <button class="clock">02:43 PM<br>03-03-2026</button>
  </div>
</footer>

</body>
</html>
```
FILE: styles.css
```css
body, h1, h2, h3, ul, li {
  margin: 0;
  padding: 0;
}

ul {
  list-style-type: none;
}

body {
  display: flex;
  flex-direction: column;
  min-height: 100vh;
  background: #333d49;
  color: #f0f0f2;
  font: 15px/20px "Noto Sans", sans-serif;
}

h1, h2 {
  font-size: 15px;
  font-weight: 400;
}

button {
  display: flex;
  align-items: center;
  justify-content: center;
  margin: 0;
  padding: 0;
  border: 0;
  background: none;
  color: inherit;
  font: inherit;
}

svg {
  flex: none;
}

a {
  color: inherit;
  text-decoration: none;
}

.defs {
  position: absolute;
}

.caret {
  width: 8px;
  height: 6px;
}

/* title bar */
.titlebar {
  display: flex;
  align-items: center;
  height: 29px;
  background: #202020;
}

.titlebar h1 {
  flex: 1;
  margin-left: 8px;
  font: 14px/20px "Open Sans", sans-serif;
}

.app-icon {
  position: relative;
  width: 17px;
  height: 20px;
}

.app-icon b {
  position: absolute;
  top: 0;
  left: 5px;
  font-size: 12px;
  line-height: 14px;
}

.win-buttons {
  display: flex;
}

.win-buttons button {
  width: 59px;
  height: 29px;
}

/* document tabs */
.tabbar {
  display: flex;
  height: 40px;
  background: #222731;
}

.quick {
  display: flex;
  align-items: center;
  width: 288px;
  box-sizing: border-box;
  padding-left: 7px;
}

.with-caret {
  gap: 8px;
  margin-left: 16px;
}

.with-caret.file {
  margin-left: 24px;
}

.quick .save {
  margin-left: 22px;
  margin-right: 8px;
}

.with-caret.dim {
  opacity: .6;
}

.quick .home {
  margin: 10px 0 0 23px;
}

.doc-tabs {
  flex: 1;
  display: flex;
}

.doc-tab {
  flex: 1;
  display: flex;
  align-items: center;
  margin-top: 5px;
  padding-right: 8px;
  border-radius: 5px 5px 0 0;
}

.doc-tab a {
  flex: 1;
  display: flex;
  align-items: center;
  justify-content: center;
  gap: 8px;
  padding-top: 2px;
  font: 16px/20px "Liberation Sans", Arial, sans-serif;
}

.doc-tab button {
  width: 12px;
  color: #9a9da3;
}

.doc-tab.active {
  background: #3b4453;
}

.account {
  display: flex;
  align-items: center;
  width: 313px;
  box-sizing: border-box;
  padding: 0 15px 0 26px;
}

.account .ext { margin-left: 36px; }
.account .jobs { margin-left: 23px; gap: 6px; }
.account .bell { margin-left: 28px; }
.account .help { margin-left: 25px; position: relative; }
.account .avatar { margin-left: auto; }

.help b {
  position: absolute;
  color: #222731;
  font-size: 14px;
}

/* ribbon */
.ribbon {
  display: flex;
  height: 106px;
  background: #3b4453;
}

.workspace {
  width: 138px;
  margin: 13px 6px 17px 10px;
  padding-bottom: 2px;
  border: 2px solid #717b8b;
  border-radius: 5px;
  box-sizing: border-box;
  gap: 9px;
  font-weight: 600;
}

.ribbon-main {
  flex: 1;
}

.ribbon-tabs {
  display: flex;
  gap: 28px;
  height: 32px;
  padding-left: 15px;
}

.ribbon-tabs a {
  padding: 3px 15px 0;
}

.ribbon-tabs .current {
  border-bottom: 4px solid #f0f0f4;
  font-weight: 600;
}

.groups {
  display: flex;
}

.group {
  display: flex;
  flex-direction: column;
  align-items: center;
  gap: 3px;
  padding: 0 11px 0 10px;
  border-right: 1px solid #596273;
  height: 66px;
}

.group.wide { padding: 0 15px; }
.group.select { padding: 0 14px; border: 0; }
.group.finish { flex: 1; padding-right: 18px; border: 0; }

.tools {
  display: flex;
  gap: 10px;
}

.tools svg {
  width: 44px;
  height: 44px;
}

.group-label {
  gap: 4px;
  white-space: nowrap;
}

/* canvas */
.canvas {
  position: relative;
  flex: 1;
  border-bottom: 4px solid #4a5360;
}

.sketch {
  position: absolute;
  inset: 0;
}

.sketch text {
  font: 600 13px "Noto Sans", sans-serif;
  text-anchor: middle;
  stroke: none;
}

.sketch .cube-face { fill: #5c6269; }
.sketch .axis-z { fill: #3535a5; }
.sketch .axis-x { fill: #8a3535; }

/* browser tree */
.browser {
  position: absolute;
  top: 5px;
  left: 2px;
  width: 373px;
}

.panel-head, .comments {
  display: flex;
  align-items: center;
  height: 29px;
  background: #3b4453;
  border-bottom: 1px solid #4b5566;
}

.panel-head {
  padding: 0 15px 0 7px;
}

.panel-head h2 {
  flex: 1;
  margin-left: 15px;
}

.tree {
  margin-top: 4px;
}

.tree li {
  display: flex;
  align-items: center;
  height: 30px;
  padding-left: 38px;
}

.tree .root { padding-left: 16px; }
.tree .leaf { padding-left: 89px; }

.tw {
  flex: none;
  width: 22px;
  margin-right: 7px;
}

.chip {
  display: flex;
  align-items: center;
  height: 24px;
  padding-right: 14px;
  background: #3b4453;
  white-space: nowrap;
}

.vis {
  flex: none;
  width: 26px;
}

.chip > svg {
  margin-left: 9px;
}

.chip > span {
  margin-left: 17px;
}

.chip.short > svg { margin-left: 3px; }
.chip.short > span { margin-left: 18px; }

.chip .name {
  display: flex;
  align-items: center;
  gap: 18px;
  height: 24px;
  margin-left: 5px;
  padding: 0 13px 0 3px;
  background: #242932;
  font-weight: 600;
}

.chip input {
  appearance: none;
  width: 16px;
  height: 16px;
  margin: 0 -5px 0 6px;
  border: 5px solid #fff;
  border-radius: 50%;
}

/* sketch palette */
.palette {
  position: absolute;
  top: 125px;
  right: 4px;
  width: 309px;
  border: 1px solid #4b5566;
  background: #3b4453;
}

.palette-head {
  display: flex;
  align-items: center;
  height: 28px;
  padding: 0 7px 0 13px;
  border-bottom: 2px solid #4b5566;
}

.palette-head h2 {
  flex: 1;
  margin-left: 10px;
}

.palette h3 {
  display: flex;
  align-items: center;
  gap: 9px;
  height: 37px;
  padding-left: 12px;
  font-size: 15px;
  font-weight: 600;
}

.palette h3 .caret {
  width: 9px;
  height: 7px;
}

.circle-row {
  display: flex;
  padding-left: 15px;
}

.circle-row > span {
  width: 133px;
  line-height: 38px;
}

.circle-tools {
  display: grid;
  grid-template-columns: repeat(4, 30px);
  grid-auto-rows: 37px;
  gap: 0 6px;
}

.circle-tools button {
  height: 33px;
  align-self: center;
}

.circle-tools .on {
  background: #345570;
  outline: 1px solid #447ba0;
}

.circle-tools svg {
  width: 22px;
  height: 22px;
}

.palette hr {
  margin: 8px 16px 5px 2px;
  border: 0;
  border-top: 1px solid #4f596a;
}

.options > div {
  display: flex;
  align-items: center;
  height: 37px;
  padding-left: 15px;
}

.options > div:nth-child(even) {
  height: 38px;
}

.options span, .options label {
  width: 140px;
  white-space: nowrap;
}

.options button {
  width: 16px;
}

.options .second {
  margin-left: 20px;
}

.options input {
  appearance: none;
  display: grid;
  place-items: center;
  width: 16px;
  height: 16px;
  margin: 0;
  border: 1px solid #7b8595;
  background: #434d5e;
}

.options input:checked {
  border-color: #fff;
  background: #fff;
}

.options input:checked::before {
  content: "";
  width: 7px;
  height: 3px;
  margin-bottom: 3px;
  border: solid #333b48;
  border-width: 0 0 2px 2px;
  transform: rotate(-45deg);
}

.options .off { color: #7e8693; }
.options .off input { border-color: #596273; background: none; }

.palette-foot {
  display: flex;
  justify-content: flex-end;
  margin-top: 1px;
  padding: 8px 16px 5px;
  border-top: 1px solid #4f596a;
}

.palette-foot button {
  height: 30px;
  padding: 0 16px;
  border: 1px solid #808a9a;
  border-radius: 2px;
}

/* bottom of the canvas */
.comments {
  position: absolute;
  bottom: 6px;
  left: 2px;
  width: 373px;
  box-sizing: border-box;
  height: 30px;
  padding: 0 15px 0 34px;
}

.comments h2 {
  flex: 1;
}

.navbar {
  position: absolute;
  bottom: 7px;
  left: 50%;
  display: flex;
  align-items: center;
  gap: 11px;
  height: 30px;
  margin-left: -152px;
  padding: 0 3px 0 5px;
  background: #3b4453;
}

.has-menu {
  gap: 6px;
}

.has-menu + .has-menu {
  gap: 4px;
  margin-left: -4px;
}

.has-menu .caret {
  width: 7px;
}

.assistant {
  position: absolute;
  right: 14px;
  bottom: 8px;
}

/* taskbar */
.taskbar {
  display: grid;
  grid-template-columns: 1fr auto 1fr;
  align-items: center;
  height: 58px;
  background: #1f252b;
  font: 14px/20px "Open Sans", sans-serif;
}

.apps {
  grid-column: 2;
  display: flex;
  gap: 5px;
  margin-right: 4px;
}

.apps button {
  position: relative;
  width: 50px;
  height: 50px;
  border-radius: 4px;
}

.apps svg {
  width: 30px;
  height: 30px;
}

.apps .alert { background: #7d444b; }
.apps .now { background: #2d3439; }

.run::after, .alert::after {
  content: "";
  position: absolute;
  bottom: 0;
  width: 7px;
  height: 4px;
  border-radius: 2px;
  background: #9b9fa2;
}

.alert::after { width: 40px; background: #ff9ca6; }
.now::after { width: 20px; background: #a9adb0; }

.badge {
  position: absolute;
  top: 4px;
  left: 27px;
  width: 20px;
  border-radius: 10px;
  background: #a6a6a4;
  color: #111;
  font-style: normal;
}

.badge.pill {
  left: 18px;
  width: 34px;
}

.badge.red {
  top: 9px;
  width: 18px;
  border-radius: 4px;
  background: #e53b3b;
  color: #fff;
  font-size: 10px;
  line-height: 14px;
}

.logo-in, .logo-zoom, .logo-ki, .logo-f, .logo-fus {
  position: absolute;
  color: #fff;
}

.logo-in { font-size: 22px; }
.logo-zoom { font-size: 9px; }
.logo-ki { font-size: 18px; }
.logo-f { top: 8px; font-size: 16px; }
.logo-fus { bottom: 10px; font-size: 7px; line-height: 8px; }

.tray {
  justify-self: end;
  display: flex;
  align-items: center;
  padding-right: 23px;
}

.tray > button + button { margin-left: 23px; }

.tray .lang {
  margin-left: 22px;
}

.tray .status {
  gap: 9px;
}

.tray .clock {
  text-align: right;
}
```
